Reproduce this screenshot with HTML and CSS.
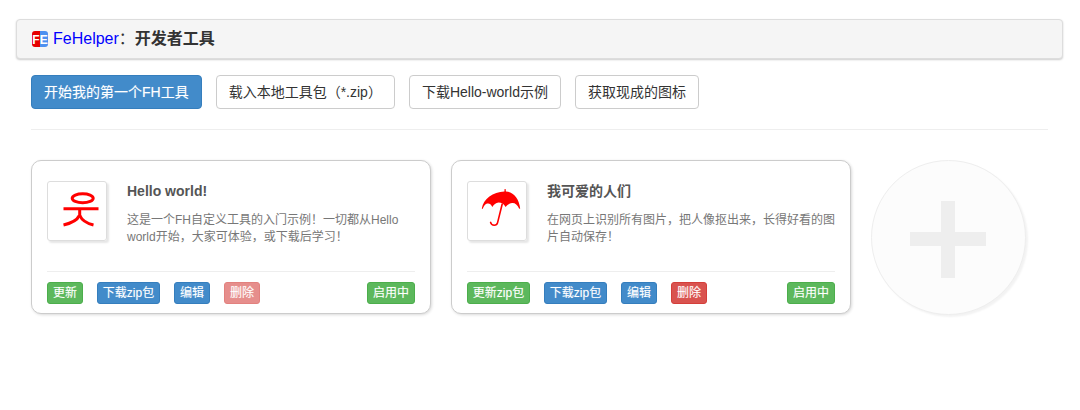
FILE: index.html
```html
<!DOCTYPE html>
<html lang="zh-CN">
<head>
<meta charset="utf-8">
<title>FeHelper：开发者工具</title>
<link rel="stylesheet" href="styles.css">
</head>
<body>
<header class="panel">
  <svg class="logo" viewBox="0 0 16 16" width="16" height="16" aria-hidden="true">
    <path d="M3 0H8V16H3A3 3 0 0 1 0 13V3A3 3 0 0 1 3 0Z" fill="#e60000"/>
    <path d="M8 0H13A3 3 0 0 1 16 3V13A3 3 0 0 1 13 16H8Z" fill="#4d90f0"/>
    <text class="logo-text" x="8" y="12.5" text-anchor="middle">FE</text>
  </svg>
  <h1 class="title"><span class="brand">FeHelper</span><span class="colon">：</span>开发者工具</h1>
</header>
<main class="content">
  <nav class="actions">
    <a class="btn btn-main">开始我的第一个FH工具</a>
    <a class="btn">载入本地工具包（*.zip）</a>
    <a class="btn">下载Hello-world示例</a>
    <a class="btn">获取现成的图标</a>
  </nav>
  <hr class="rule">
  <section class="cards">
    <article class="card">
      <div class="card-body">
        <div class="icon">
          <svg class="icon-art" viewBox="0 0 58 58" width="58" height="58" aria-hidden="true">
            <g fill="none" stroke="#f00" stroke-width="3">
              <ellipse cx="34.7" cy="16.3" rx="10.5" ry="4.5"/>
              <path d="M15.5 26.7H50.5"/>
              <path d="M31.7 27V34"/>
              <path d="M31.4 33.5C29 38.5 22 41.5 15.5 43"/>
              <path d="M31.8 33.5C34 38.5 39 41.5 45.5 43"/>
            </g>
          </svg>
        </div>
        <div class="info">
          <h2 class="name">Hello world!</h2>
          <p class="desc">这是一个FH自定义工具的入门示例！一切都从Hello world开始，大家可体验，或下载后学习！</p>
        </div>
      </div>
      <div class="card-foot">
        <a class="tag tag-green">更新</a>
        <a class="tag tag-blue tag-zip">下载zip包</a>
        <a class="tag tag-blue">编辑</a>
        <a class="tag tag-red tag-off">删除</a>
        <a class="tag tag-green tag-end">启用中</a>
      </div>
    </article>
    <article class="card">
      <div class="card-body">
        <div class="icon">
          <svg class="icon-art" viewBox="0 0 58 58" width="58" height="58" aria-hidden="true">
            <path d="M36.6 7L37.6 7 37.9 9.4C45.4 10 51 16.4 52.2 26.4L51.2 26.8C49.4 22.4 46.6 20.6 44 21 41.4 21.4 39 23 37.6 25 36 22 33.4 20.6 30.6 20.6 27.8 20.8 25.8 22.6 24.4 25 22.8 21.8 21 21 19 21.6 17 22.4 15.6 24.6 14.6 27L13.8 26.4C15.4 16.4 25 10 36.4 9.4Z" fill="#f00"/>
            <path d="M34.2 22L29.6 40.6C28.8 44 23.6 44.2 22.6 40.4" fill="none" stroke="#f00" stroke-width="1.6" stroke-linecap="round"/>
          </svg>
        </div>
        <div class="info">
          <h2 class="name">我可爱的人们</h2>
          <p class="desc">在网页上识别所有图片，把人像抠出来，长得好看的图片自动保存！</p>
        </div>
      </div>
      <div class="card-foot">
        <a class="tag tag-green tag-zip">更新zip包</a>
        <a class="tag tag-blue tag-zip">下载zip包</a>
        <a class="tag tag-blue">编辑</a>
        <a class="tag tag-red">删除</a>
        <a class="tag tag-green tag-end">启用中</a>
      </div>
    </article>
    <a class="add" aria-label="添加">
      <span class="add-h"></span>
      <span class="add-v"></span>
    </a>
  </section>
</main>
</body>
</html>
```
FILE: styles.css
```css
* { box-sizing: border-box; }
html, body { margin: 0; padding: 0; }
body {
  width: 1080px;
  height: 410px;
  overflow: hidden;
  background: #fff;
  color: #333;
  font-family: "Liberation Sans", "Noto Sans CJK SC", sans-serif;
  font-size: 14px;
  line-height: 20px;
}
.panel {
  display: flex;
  align-items: center;
  gap: 5px;
  width: 1047px;
  height: 40px;
  margin: 19px 0 0 16px;
  padding-left: 15px;
  background: #f5f5f5;
  border: 1px solid #ddd;
  border-radius: 4px;
  box-shadow: 0 1px 2px rgba(0, 0, 0, .2);
}
.logo { flex: none; }
.logo-text {
  fill: #fff;
  font: bold 12px "Liberation Sans", sans-serif;
}
.title {
  margin: 0;
  font-size: 16px;
  font-weight: bold;
  line-height: 20px;
}
.brand { color: #00f; font-weight: normal; }
.colon { font-weight: normal; }
.content { padding: 16px 32px 0 31px; }
.actions { display: flex; gap: 14px; }
.btn {
  display: block;
  height: 34px;
  padding: 6px 12px;
  color: #333;
  background: #fff;
  border: 1px solid #ccc;
  border-radius: 4px;
}
.btn-main {
  color: #fff;
  background: #428bca;
  border-color: #357ebd;
  text-shadow: 0 0 1px rgba(255, 255, 255, .35);
}
.rule {
  height: 1px;
  margin: 20px 0 30px;
  background: #eee;
  border: 0;
}
.cards { display: flex; gap: 20px; }
.card {
  width: 400px;
  height: 154px;
  padding: 20px 15px 0;
  background: #fff;
  border: 1px solid #ccc;
  border-radius: 10px;
  box-shadow: 1px 1px 3px rgba(0, 0, 0, .15);
}
.card-body { display: flex; gap: 20px; height: 90px; }
.icon {
  flex: none;
  width: 60px;
  height: 60px;
  border: 1px solid #ddd;
  border-radius: 3px;
  box-shadow: 2px 2px 2px rgba(0, 0, 0, .1);
}
.icon-art { display: block; }
.info { flex: 1; min-width: 0; }
.name {
  margin: 0;
  color: #555;
  font-size: 14px;
  font-weight: bold;
  line-height: 20px;
}
.desc {
  margin: 11px 0 0;
  color: #777;
  font-size: 12px;
  line-height: 17px;
}
.card-foot {
  display: flex;
  gap: 14px;
  padding-top: 10px;
  border-top: 1px solid #eee;
}
.tag {
  display: block;
  height: 22px;
  padding: 1px 5px;
  color: #fff;
  font-size: 12px;
  line-height: 18px;
  white-space: nowrap;
  border: 1px solid transparent;
  border-radius: 3px;
  text-shadow: 0 0 1px rgba(255, 255, 255, .35);
}
.tag-zip { width: 63px; padding: 1px 0; text-align: center; }
.tag-green { background: #5cb85c; border-color: #4cae4c; }
.tag-blue { background: #428bca; border-color: #357ebd; }
.tag-red { background: #d9534f; border-color: #d43f3a; }
.tag-off { opacity: .65; }
.tag-end { margin-left: auto; }
.add {
  position: relative;
  display: block;
  flex: none;
  width: 155px;
  height: 155px;
  background: #fcfcfc;
  border: 1px solid #eee;
  border-radius: 50%;
  box-shadow: 2px 2px 2px rgba(0, 0, 0, .05);
}
.add-h, .add-v {
  position: absolute;
  background: #eee;
}
.add-h { left: 38px; top: 71px; width: 76px; height: 14px; }
.add-v { left: 69px; top: 40px; width: 14px; height: 77px; }
```
